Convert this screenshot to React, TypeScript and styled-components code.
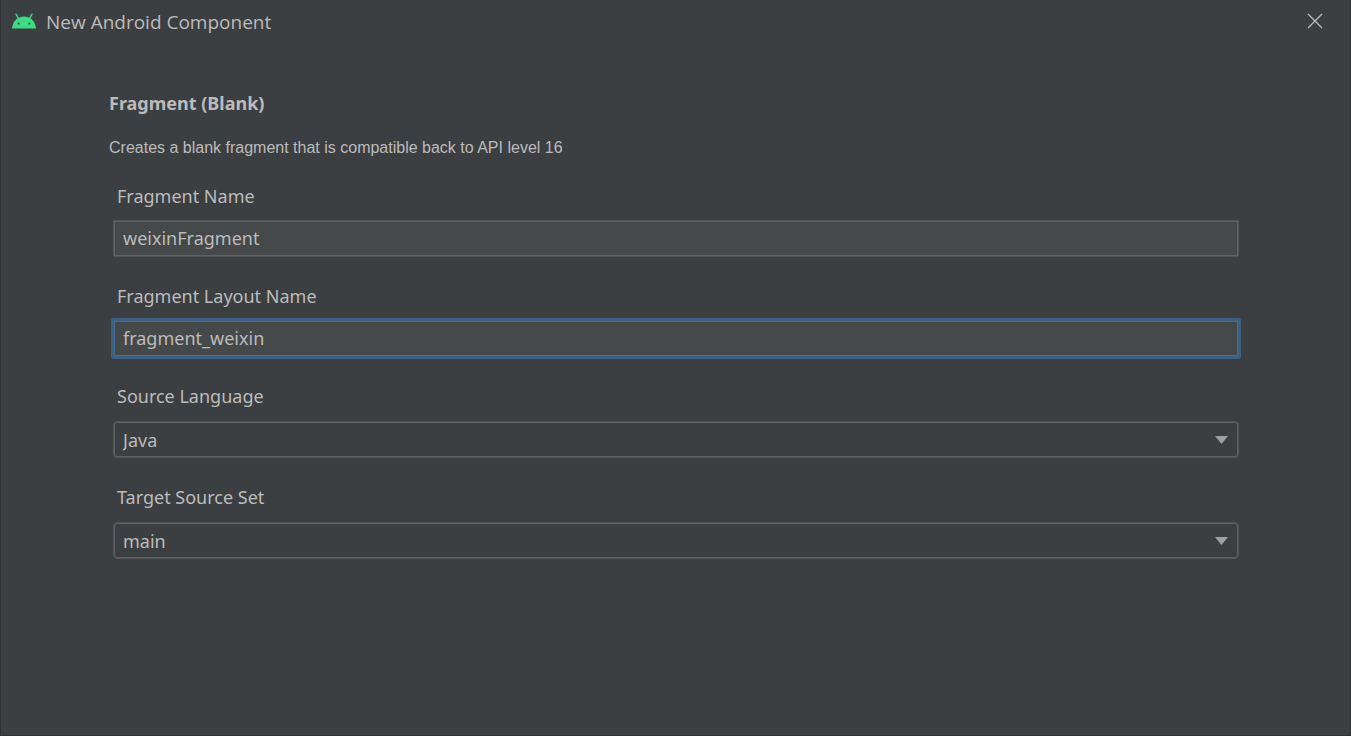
import React, { useState } from "react";
import styled, { createGlobalStyle, css } from "styled-components";

const GlobalStyle = createGlobalStyle`
  * { box-sizing: border-box; }
  body {
    margin: 0;
    background: #3c3f41;
    color: #bbbbbb;
    font-family: "Noto Sans", sans-serif;
    font-size: 18px;
    line-height: 24px;
  }
`;

const Dialog = styled.div`
  min-height: 100vh;
  background: #3c3f41;
  border: 1px solid #2f3234;
  border-top: 0;
`;

const TitleBar = styled.header`
  display: flex;
  align-items: center;
  height: 42px;
  padding: 0 24px 0 11px;
`;

const Logo = styled.svg`
  width: 24px;
  height: 16px;
  margin-right: 10px;
`;

const Title = styled.h1`
  flex: 1;
  margin: 0;
  padding-top: 2px;
  font-family: "Open Sans", "Noto Sans", sans-serif;
  font-size: 19px;
  font-weight: 400;
`;

const CloseButton = styled.button`
  display: grid;
  place-items: center;
  width: 22px;
  height: 22px;
  padding: 0;
  border: 0;
  background: transparent;
  color: #bbbbbb;
`;

const Content = styled.main`
  padding: 49px 108px 24px;
`;

const Heading = styled.h2`
  margin: 0 0 21px;
  font-size: 18px;
  font-weight: 700;
`;

const Description = styled.p`
  margin: 0;
  font-family: "Liberation Sans", sans-serif;
  font-size: 16px;
`;

const Form = styled.form`
  display: flex;
  flex-direction: column;
  gap: 27px;
  margin: 24px 3px 0 4px;
`;

const Field = styled.div<{ $gap?: number }>`
  display: flex;
  flex-direction: column;
  gap: ${({ $gap = 12 }) => $gap}px;
`;

const Label = styled.label`
  padding-left: 4px;
`;

const control = css`
  display: block;
  width: 100%;
  height: 37px;
  padding: 0 9px;
  border: 1px solid #515354;
  box-shadow: inset 0 0 0 1px #5f6162;
  color: #bbbbbb;
  font: inherit;
  outline: 0;
`;

const TextBox = styled.input<{ $active: boolean }>`
  ${control}
  padding-bottom: 2px;
  background: #45494a;
  ${({ $active }) =>
    $active &&
    css`
      border-color: #3d6185;
      border-radius: 1px;
      box-shadow: inset 0 0 0 1px #466d94, 0 0 0 2px #3d6185;
    `}
`;

const SelectWrap = styled.div`
  position: relative;
`;

const Select = styled.select`
  ${control}
  appearance: none;
  background: #3c3f41;
  border-radius: 4px;
`;

const Arrow = styled.svg`
  position: absolute;
  top: 15px;
  right: 11px;
  width: 13px;
  height: 8px;
  pointer-events: none;
`;

function AndroidLogo() {
  return (
    <Logo viewBox="0 0 24 16" aria-hidden="true">
      <path d="M4 1.2 6.6 5.8M20 1.2 17.4 5.8" stroke="#3ddc84" strokeWidth="1.5" strokeLinecap="round" />
      <path d="M0 15.5C.6 8.4 5.5 3.5 12 3.5S23.4 8.4 24 15.5Z" fill="#3ddc84" />
      <circle cx="6.7" cy="10.5" r="1" fill="#3c3f41" />
      <circle cx="17.3" cy="10.5" r="1" fill="#3c3f41" />
    </Logo>
  );
}

function SelectField({ id, label, options }: { id: string; label: string; options: string[] }) {
  return (
    <Field $gap={13}>
      <Label htmlFor={id}>{label}</Label>
      <SelectWrap>
        <Select id={id}>
          {options.map((option) => (
            <option key={option}>{option}</option>
          ))}
        </Select>
        <Arrow viewBox="0 0 13 8" aria-hidden="true">
          <path d="M0 0H13L6.5 8Z" fill="#9da0a3" />
        </Arrow>
      </SelectWrap>
    </Field>
  );
}

export default function App() {
  const [name, setName] = useState("weixinFragment");
  const [layout, setLayout] = useState("fragment_weixin");
  const [active, setActive] = useState("layout");

  return (
    <>
      <GlobalStyle />
      <Dialog role="dialog" aria-labelledby="dialog-title">
        <TitleBar>
          <AndroidLogo />
          <Title id="dialog-title">New Android Component</Title>
          <CloseButton type="button" aria-label="Close">
            <svg width="16" height="16" viewBox="0 0 16 16" aria-hidden="true">
              <path d="M1 1 15 15M15 1 1 15" stroke="currentColor" strokeWidth="1.3" />
            </svg>
          </CloseButton>
        </TitleBar>
        <Content>
          <Heading>Fragment (Blank)</Heading>
          <Description>Creates a blank fragment that is compatible back to API level 16</Description>
          <Form>
            <Field>
              <Label htmlFor="name">Fragment Name</Label>
              <TextBox
                id="name"
                value={name}
                $active={active === "name"}
                onFocus={() => setActive("name")}
                onChange={(e) => setName(e.target.value)}
              />
            </Field>
            <Field>
              <Label htmlFor="layout">Fragment Layout Name</Label>
              <TextBox
                id="layout"
                value={layout}
                $active={active === "layout"}
                onFocus={() => setActive("layout")}
                onChange={(e) => setLayout(e.target.value)}
              />
            </Field>
            <SelectField id="language" label="Source Language" options={["Java", "Kotlin"]} />
            <SelectField id="source-set" label="Target Source Set" options={["main"]} />
          </Form>
        </Content>
      </Dialog>
    </>
  );
}
